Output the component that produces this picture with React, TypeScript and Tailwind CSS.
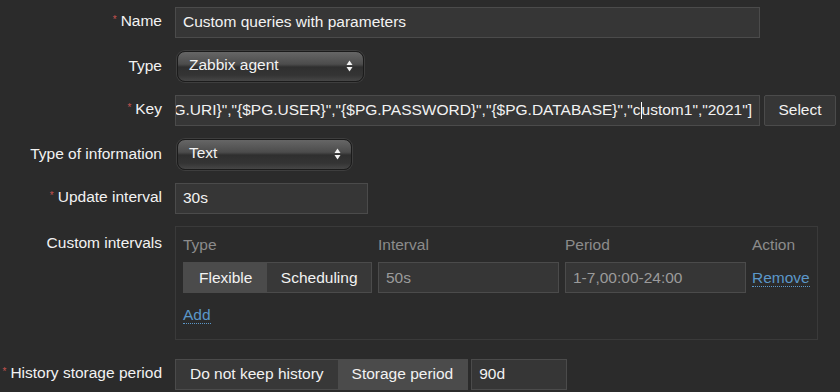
import type { ReactNode } from "react";

function Label({ text, required }: { text: string; required?: boolean }) {
  return (
    <div className="w-[162px] shrink-0 text-right whitespace-nowrap">
      {required && (
        <span className="relative top-[-3px] mr-[4px] text-[10px] text-[#c4524e]">*</span>
      )}
      {text}
    </div>
  );
}

function Row({
  label,
  required,
  children,
  top,
}: {
  label: string;
  required?: boolean;
  children: ReactNode;
  top?: boolean;
}) {
  return (
    <div className={`flex gap-[13px] ${top ? "items-start" : "items-center h-[32px]"}`}>
      <div className={top ? "pt-[8px]" : ""}>
        <Label text={label} required={required} />
      </div>
      {children}
    </div>
  );
}

function Input({ value, w, muted }: { value: string; w: string; muted?: boolean }) {
  return (
    <div
      className={`${w} h-[31px] flex items-center px-[7px] bg-[#363636] border border-[#4b4b4b] whitespace-nowrap ${
        muted ? "text-[#9b9b9b]" : ""
      }`}
    >
      {value}
    </div>
  );
}

function Select({ value, w }: { value: string; w: string }) {
  return (
    <div
      className={`${w} ml-[2px] h-[31px] flex items-center justify-between pl-[11px] pr-[10px] rounded-[8px] border border-[#1b1b1b] shadow-[0_0_0_1px_#3e3e3e] bg-[linear-gradient(to_bottom,#666666_0%,#4c4c4c_42%,#2f2f2f_52%,#343434_80%,#464646_100%)]`}
    >
      <span className="relative top-[-1px]">{value}</span>
      <svg width="7" height="12" viewBox="0 0 7 12">
        <path d="M3.5 0.5 L6.5 5 L0.5 5 Z" fill="#f2f2f2" />
        <path d="M3.5 11.5 L6.5 7 L0.5 7 Z" fill="#f2f2f2" />
      </svg>
    </div>
  );
}

function Link({ text }: { text: string }) {
  return (
    <span className="text-[#5b97c9] border-b border-dotted border-[#5b97c9] leading-[17px]">
      {text}
    </span>
  );
}

export default function App() {
  return (
    <div className="w-[840px] h-[392px] overflow-hidden bg-[#2b2b2b] text-[15.5px] leading-[18px] text-[#f2f2f2] font-['Liberation_Sans',Arial,sans-serif] pt-[6px] flex flex-col gap-[12px]">
      <Row label="Name" required>
        <Input value="Custom queries with parameters" w="w-[585px]" />
      </Row>

      <Row label="Type">
        <Select value="Zabbix agent" w="w-[187px]" />
      </Row>

      <Row label="Key" required>
        <div className="flex gap-[4px]">
          <div className="w-[585px] h-[31px] flex items-center justify-end pr-[7px] bg-[#363636] border border-[#4b4b4b] overflow-hidden whitespace-nowrap">
            <span>
              G.URI{"}"}","{"{"}$PG.USER{"}"}","{"{"}$PG.PASSWORD{"}"}","{"{"}$PG.DATABASE{"}"}","c
              <span className="inline-block w-px h-[17px] bg-white align-middle" />
              ustom1","2021"]
            </span>
          </div>
          <div className="w-[72px] h-[31px] flex items-center justify-center bg-[#363636] border border-[#4b4b4b] rounded-[2px]">
            Select
          </div>
        </div>
      </Row>

      <Row label="Type of information">
        <Select value="Text" w="w-[175px]" />
      </Row>

      <Row label="Update interval" required>
        <Input value="30s" w="w-[193px]" />
      </Row>

      <Row label="Custom intervals" top>
        <div className="w-[643px] h-[114px] border border-[#3a3a3a] px-[7px] pt-[9px]">
          <div className="grid grid-cols-[189px_181px_181px_1fr] gap-x-[6px] text-[#8c8c8c]">
            <div>Type</div>
            <div>Interval</div>
            <div>Period</div>
            <div>Action</div>
          </div>
          <div className="grid grid-cols-[189px_181px_181px_1fr] gap-x-[6px] mt-[8px] items-center">
            <div className="flex h-[31px] border border-[#4b4b4b]">
              <div className="flex items-center px-[15px] bg-[#4b4b4b]">Flexible</div>
              <div className="flex-1 flex items-center justify-center bg-[#383838]">Scheduling</div>
            </div>
            <Input value="50s" w="w-[181px]" muted />
            <Input value="1-7,00:00-24:00" w="w-[181px]" muted />
            <div>
              <Link text="Remove" />
            </div>
          </div>
          <div className="mt-[13px]">
            <Link text="Add" />
          </div>
        </div>
      </Row>

      <div className="mt-[6px]">
        <Row label="History storage period" required>
          <div className="flex gap-[3px]">
            <div className="flex h-[31px] border border-[#4b4b4b]">
              <div className="flex items-center px-[14px] bg-[#383838]">Do not keep history</div>
              <div className="flex items-center px-[14px] bg-[#4b4b4b]">Storage period</div>
            </div>
            <Input value="90d" w="w-[96px]" />
          </div>
        </Row>
      </div>
    </div>
  );
}
